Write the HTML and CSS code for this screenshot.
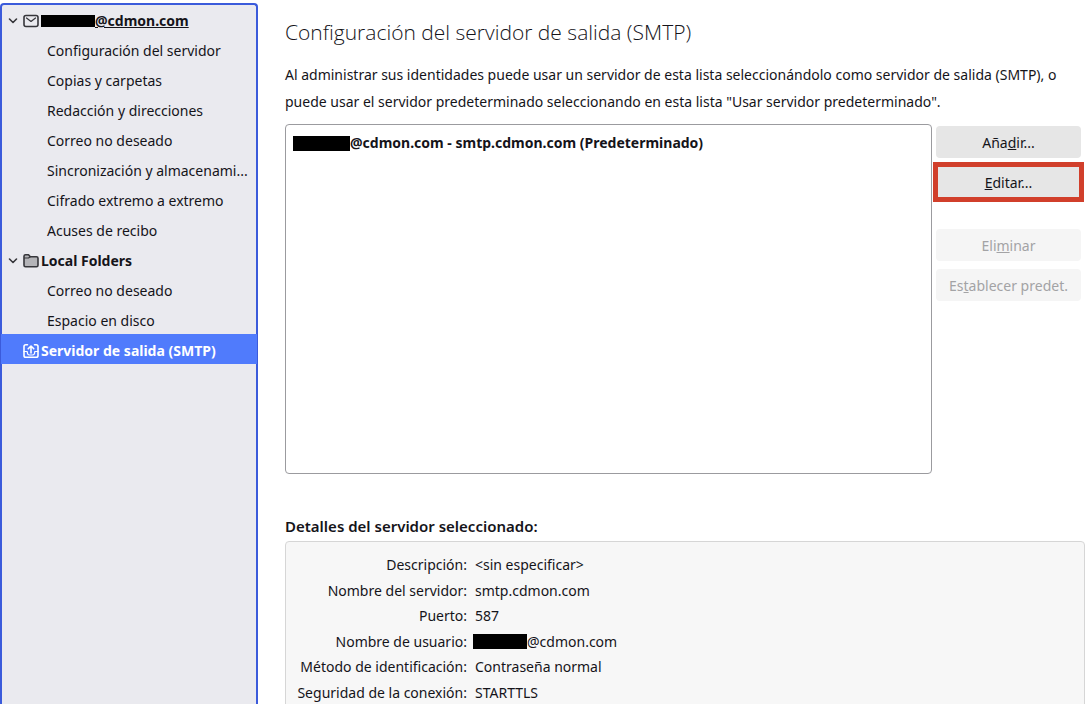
FILE: index.html
```html
<!DOCTYPE html>
<html lang="es">
<head>
<meta charset="utf-8">
<meta name="viewport" content="width=device-width, initial-scale=1">
<title>Configuración del servidor de salida (SMTP)</title>
<link rel="stylesheet" href="styles.css">
</head>
<body>
<div class="app">
  <nav class="sidebar" aria-label="Cuentas">
    <ul class="tree">
      <li><a class="row account underlined" href="#cuenta">
        <svg class="chevron" viewBox="0 0 10 10" aria-hidden="true"><path d="M1.5 3L5 6.5 8.5 3"/></svg>
        <svg class="icon" viewBox="0 0 16 16" aria-hidden="true"><rect x="1" y="2.5" width="14" height="11" rx="2"/><path class="thin" d="M3.5 5L8 8.5 12.5 5"/></svg>
        <span class="redacted"></span><span class="label">@cdmon.com</span></a></li>
      <li><a class="row child" href="#servidor">Configuración del servidor</a></li>
      <li><a class="row child" href="#copias">Copias y carpetas</a></li>
      <li><a class="row child" href="#redaccion">Redacción y direcciones</a></li>
      <li><a class="row child" href="#spam">Correo no deseado</a></li>
      <li><a class="row child" href="#sincronizacion">Sincronización y almacenami...</a></li>
      <li><a class="row child" href="#cifrado">Cifrado extremo a extremo</a></li>
      <li><a class="row child" href="#acuses">Acuses de recibo</a></li>
      <li><a class="row account" href="#local">
        <svg class="chevron" viewBox="0 0 10 10" aria-hidden="true"><path d="M1.5 3L5 6.5 8.5 3"/></svg>
        <svg class="icon" viewBox="0 0 16 16" aria-hidden="true"><path class="folder" d="M1 3.3q0-1.5 1.5-1.5h3L7.3 3.8h6.2q1.5 0 1.5 1.5v7q0 1.5-1.5 1.5h-11Q1 13.8 1 12.3z"/><path class="thin" d="M1.5 5h4l1.8-1.2"/></svg>
        <span class="label">Local Folders</span></a></li>
      <li><a class="row child" href="#spam-local">Correo no deseado</a></li>
      <li><a class="row child" href="#disco">Espacio en disco</a></li>
      <li><a class="row account selected" href="#smtp" aria-current="page">
        <span class="chevron"></span>
        <svg class="icon" viewBox="0 0 16 16" aria-hidden="true"><path d="M4.5 1.8H2.8Q1 1.8 1 3.6v8.8q0 1.8 1.8 1.8h10.4q1.8 0 1.8-1.8V3.6q0-1.8-1.8-1.8H11.5"/><path d="M8 10V3.2M5.2 5.8L8 3l2.8 2.8"/><path class="thin" d="M1 8.5h3.2q0 3.5 2.3 3.5h3q2.3 0 2.3-3.5H15"/></svg>
        <span class="label">Servidor de salida (SMTP)</span></a></li>
    </ul>
  </nav>
  <main class="content">
    <h1 class="title">Configuración del servidor de salida (SMTP)</h1>
    <p class="intro">Al administrar sus identidades puede usar un servidor de esta lista seleccionándolo como servidor de salida (SMTP), o puede usar el servidor predeterminado seleccionando en esta lista "Usar servidor predeterminado".</p>
    <div class="servers">
      <ul class="server-list" aria-label="Servidores de salida">
        <li class="server"><span class="redacted"></span><span>@cdmon.com - smtp.cdmon.com (Predeterminado)</span></li>
      </ul>
      <div class="actions">
        <button class="button" type="button">Aña<u>d</u>ir...</button>
        <button class="button highlighted" type="button"><u>E</u>ditar...</button>
        <button class="button spaced" type="button" disabled>Eli<u>m</u>inar</button>
        <button class="button" type="button" disabled>Es<u>t</u>ablecer predet.</button>
      </div>
    </div>
    <h2 class="subtitle">Detalles del servidor seleccionado:</h2>
    <div class="details">
      <table class="facts">
        <tbody>
          <tr><th scope="row">Descripción:</th><td>&lt;sin especificar&gt;</td></tr>
          <tr><th scope="row">Nombre del servidor:</th><td>smtp.cdmon.com</td></tr>
          <tr><th scope="row">Puerto:</th><td>587</td></tr>
          <tr><th scope="row">Nombre de usuario:</th><td><div class="user"><span class="redacted"></span>@cdmon.com</div></td></tr>
          <tr><th scope="row">Método de identificación:</th><td>Contraseña normal</td></tr>
          <tr><th scope="row">Seguridad de la conexión:</th><td>STARTTLS</td></tr>
        </tbody>
      </table>
    </div>
  </main>
</div>
</body>
</html>
```
FILE: styles.css
```css
* { box-sizing: border-box; }

body {
  margin: 0;
  background: #fff;
  color: #15141a;
  font: 14px/20px "Noto Sans", "Open Sans", sans-serif;
}

.app {
  display: grid;
  grid-template-columns: 258px minmax(0, 1fr);
  height: 100vh;
  overflow: hidden;
}

.sidebar {
  margin-top: 3px;
  border: 2px solid #3b5bdb;
  border-bottom: 0;
  border-radius: 4px 4px 0 0;
  background: #eaeaef;
}

.tree {
  margin: -1px -1px 0;
  padding: 0;
  list-style: none;
}

.row {
  display: flex;
  align-items: center;
  height: 30px;
  padding: 3px 0 0 7px;
  color: inherit;
  text-decoration: none;
  white-space: nowrap;
}

.child { padding-left: 46px; }

.account { font-weight: 700; }

.underlined .label { text-decoration: underline; }

.selected {
  background: #507bfc;
  color: #fff;
}

.chevron {
  flex: none;
  width: 10px;
  height: 10px;
  margin-right: 5px;
}

.icon {
  flex: none;
  width: 16px;
  height: 16px;
  margin-right: 2px;
}

.chevron, .icon {
  fill: none;
  stroke: #36363b;
  stroke-width: 1.6;
  stroke-linecap: round;
  stroke-linejoin: round;
}

.selected .icon { stroke: #fff; }
.icon .thin { stroke-width: 1.2; }
.icon .folder { fill: #b4b4b8; }

.redacted {
  flex: none;
  width: 54px;
  height: 15px;
  background: #000;
}

.account .redacted { height: 12px; }

.content {
  display: flex;
  flex-direction: column;
  padding: 17px 7px 0 27px;
}

.title {
  margin: 0;
  font-family: "Open Sans", "Noto Sans", sans-serif;
  font-size: 21px;
  font-weight: 300;
  line-height: 30px;
}

.intro {
  margin: 14px 0 9px;
  line-height: 27px;
}

.servers {
  display: flex;
  align-items: stretch;
  gap: 4px;
  padding-right: 4px;
}

.server-list {
  flex: 1;
  min-height: 350px;
  margin: 0;
  padding: 8px 7px;
  border: 1px solid #9b9b9f;
  border-radius: 4px;
  list-style: none;
}

.server {
  display: flex;
  align-items: center;
  font-weight: 700;
}

.server .redacted { width: 57px; }

.actions {
  display: flex;
  flex-direction: column;
  gap: 8px;
  width: 145px;
  padding-top: 2px;
}

.button {
  height: 32px;
  padding: 2px 0 0;
  border: 0;
  border-radius: 4px;
  background: #e6e6e6;
  color: inherit;
  font: inherit;
}

.button:disabled {
  background: #f5f5f5;
  color: #a3a3a5;
}

.button.spaced { margin-top: 23px; }

.highlighted { position: relative; }

.highlighted::after {
  content: "";
  position: absolute;
  inset: -4px -3px;
  border: 5px solid #d13f2b;
}

.subtitle {
  margin: 40px 0 3px;
  font-size: 15px;
  font-weight: 600;
  line-height: 24px;
}

.details {
  flex: 1 0 auto;
  padding: 10px 0;
  border: 1px solid #d6d6d6;
  border-radius: 4px;
  background: #f7f7f7;
}

.facts { border-collapse: collapse; }

.facts tr { height: 26px; }
.facts tr:nth-child(even) { height: 25px; }

.facts th {
  width: 181px;
  padding: 0;
  font-weight: 400;
  text-align: right;
  white-space: nowrap;
}

.facts td { padding: 0 0 0 8px; }

.user {
  display: flex;
  align-items: center;
  margin-left: -2px;
}
```
